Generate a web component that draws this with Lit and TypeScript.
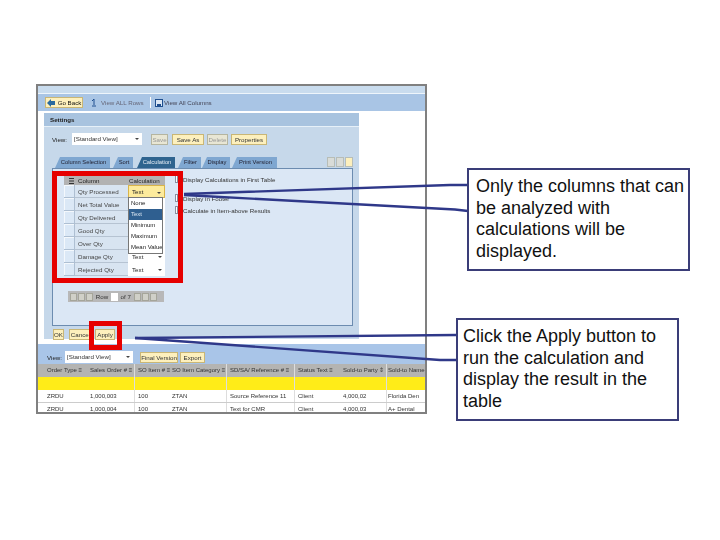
import { LitElement, html, css, svg } from "lit";
import { customElement } from "lit/decorators.js";

const ROWS = ["Qty Processed", "Net Total Value", "Qty Delivered", "Good Qty", "Over Qty", "Damage Qty", "Rejected Qty"];
const COLS = [
  "Order Type \u2261", "Sales Order # \u2261", "SO Item # \u2261", "SO Item Category \u2261",
  "SD/SA/ Reference # \u2261", "Status Text \u2261", "Sold-to Party \u21D5", "Sold-to Name",
];
const DATA = [
  ["ZRDU", "1,000,003", "100", "ZTAN", "Source Reference 11", "Client", "4,000,02", "Florida Den"],
  ["ZRDU", "1,000,004", "100", "ZTAN", "Text for CMR", "Client", "4,000,03", "A+ Dental"],
];

@customElement("app-root")
export class AppRoot extends LitElement {
  static styles = css`
    :host { display: block; width: 720px; height: 540px; background: #fff; overflow: hidden; }
    .stage { position: relative; width: 720px; height: 540px; font-family: "Liberation Sans", Arial, sans-serif; }

    .shot { position: absolute; left: 36px; top: 84px; width: 391px; height: 330px; box-sizing: border-box;
      border: 2px solid #808080; background: #fff; font-size: 6.2px; color: #222; overflow: hidden;
      display: flex; flex-direction: column; filter: blur(0.45px); }
    .top { height: 7px; background: #c9dcee; border-bottom: 1px solid #eef5fb; flex: none; }
    .toolbar { height: 17px; flex: none; background: #a9c5e5; display: flex; align-items: center; padding-left: 7px; gap: 4px; color: #445; }
    .btn { background: #fdf0bd; border: 1px solid #c9b676; height: 11px; line-height: 9px; white-space: nowrap; color: #333;
      box-sizing: border-box; text-align: center; flex: none; overflow: hidden; }
    .btn.plain { background: #e8e6d4; border-color: #b5b5a0; color: #999; }
    .goback { width: 38px; display: flex; align-items: center; justify-content: center; gap: 3px; color: #111; }
    .sep { width: 1px; height: 11px; background: #fff; }
    .rowslink { width: 45px; white-space: nowrap; color: #667; }
    .collink { white-space: nowrap; color: #445; margin-left: -3px; }
    .rowsicon { margin-left: 4px; }

    .settings { margin: 2px 0 5px 6px; width: 315px; height: 226px; flex: none; background: #c6d8ea; display: flex; flex-direction: column; }
    .sethead { height: 13px; flex: none; background: #a8c3df; border-bottom: 1px solid #e6f0f8; font-weight: bold; line-height: 13px; padding-left: 6px; }
    .viewrow { display: flex; align-items: center; height: 18px; margin-top: 3px; padding-left: 8px; flex: none; }
    .sel { background: #fff; height: 12px; line-height: 12px; padding-left: 2px; position: relative; color: #333; box-sizing: border-box; }
    .sel i { position: absolute; right: 3px; top: 5px; width: 0; height: 0; border: 2px solid transparent; border-top: 2.5px solid #444; border-bottom: 0; }
    .view-sel { width: 70px; margin-left: 5px; margin-right: 9px; }
    .w17 { width: 17px; margin-right: 4px; } .w32 { width: 32px; margin-right: 3px; }
    .w21 { width: 21px; margin-right: 3px; } .w36 { width: 36px; }

    .tabs { display: flex; margin: 9px 6px 0 11px; height: 11px; flex: none; font-size: 5.8px; }
    .tab { height: 11px; line-height: 11px; background: #7fa7d1; color: #223; text-align: center; clip-path: polygon(5px 0, 100% 0, 100% 100%, 0 100%); white-space: nowrap; flex: none; padding-left: 2px; box-sizing: border-box; }
    .tab.on { background: #2f648f; color: #e6eef6; }
    .nav { margin-left: auto; display: flex; gap: 1px; }
    .nav b { width: 8px; height: 10px; background: #d9dcd8; border: 1px solid #b7bdb7; box-sizing: border-box; }
    .nav b.act { background: #fdf0bd; }

    .panel { margin: 0 6px 0 8px; height: 158px; flex: none; background: #dbe7f5; border: 1px solid #6c8cb0; box-sizing: border-box; display: flex; }
    .left { width: 122px; padding: 7px 0 0 11px; flex: none; box-sizing: border-box; }
    .grid { width: 101px; position: relative; }
    .ghead { height: 9px; line-height: 9px; background: #b2b2b2; display: flex; align-items: center; color: #222; }
    .ghead svg { margin: 0 4px 0 5px; flex: none; }
    .ghead span { flex: none; }
    .ghead .cn { width: 51px; }
    .grow { height: 13px; display: flex; align-items: stretch; }
    .rsel { width: 11px; background: #dbe8f6; border: 1px solid #aebfd2; border-width: 0 1px 1px 0; box-sizing: border-box; flex: none; box-shadow: inset 1px 1px 0 #f4f8fc; }
    .rname { width: 53px; line-height: 13px; padding-left: 3px; box-sizing: border-box; color: #444; background: #d8e4f1; border-bottom: 1px solid #b6c3d2; flex: none; }
    .rcalc { width: 37px; background: #fff; position: relative; line-height: 13px; padding-left: 4px; box-sizing: border-box; }
    .rcalc i { position: absolute; right: 3px; top: 6px; width: 0; height: 0; border: 2px solid transparent; border-top: 2.5px solid #444; border-bottom: 0; }
    .rcalc.hot { background: #fdeb9c; border: 1px solid #d9b44a; line-height: 11px; padding-left: 3px; }
    .menu { position: absolute; left: 64px; top: 21px; width: 35px; background: #fff; border: 1px solid #777; box-sizing: border-box; font-size: 6px; z-index: 2; }
    .menu div { height: 11px; line-height: 11px; padding-left: 2px; color: #222; white-space: nowrap; overflow: hidden; }
    .menu div.on { background: #2f5f90; color: #dde8f3; }
    .pager { margin: 15px 0 0 4px; width: 96px; height: 11px; background: #b8b8b8; display: flex; align-items: center; gap: 1px; padding-left: 2px; box-sizing: border-box; color: #333; }
    .pager b { width: 7px; height: 8px; background: #d0d0c8; border: 1px solid #a5a59a; box-sizing: border-box; flex: none; }
    .pager u { text-decoration: none; display: inline-block; width: 7px; height: 8px; background: #fff; }

    .opts { flex: 1; color: #333; display: flex; flex-direction: column; padding-top: 6px; }
    .opt { display: flex; align-items: center; gap: 5px; white-space: nowrap; height: 8px; }
    .opt s { display: block; width: 3px; height: 8px; background: #fff; border: 1px solid #8a8fa0; box-sizing: border-box; flex: none; }
    .o2 { margin-top: 11px; } .o3 { margin-top: 4px; }

    .actions { display: flex; padding-left: 9px; margin-top: 3px; flex: none; }
    .ok { width: 11px; margin-right: 5px; } .cancel { width: 23px; margin-right: 3px; } .apply { width: 20px; }

    .band { flex: 1; background: #a9c5e8; display: flex; flex-direction: column; justify-content: flex-end; }
    .tview { height: 14px; display: flex; align-items: center; padding-left: 9px; flex: none; }
    .tview .sel { width: 68px; margin: 0 7px 0 3px; }
    .fv { width: 38px; margin-right: 2px; } .ex { width: 25px; }
    .table { flex: none; height: 48px; overflow: hidden; background: #fff; font-size: 6px; }
    .row { display: flex; white-space: nowrap; }
    .row > span { box-sizing: border-box; padding-left: 3px; overflow: hidden; flex: none; }
    .row.h { height: 13px; background: #b4b4b2; line-height: 13px; color: #333; }
    .row.y { height: 13px; background: #ffec18; }
    .row.d { height: 13px; line-height: 12px; border-bottom: 1px solid #ccc; box-sizing: border-box; color: #333; }
    .c0 { width: 49px; padding-left: 9px !important; }
    .c1 { width: 48px; border-right: 1px solid #ddd; }
    .c2 { width: 35px; }
    .c3 { width: 57px; padding-left: 2px !important; border-right: 1px solid #ddd; }
    .c4 { width: 68px; border-right: 1px solid #ddd; }
    .c5 { width: 45px; }
    .c6 { width: 47px; border-right: 1px solid #ddd; }
    .c7 { width: 38px; padding-left: 1px !important; }

    .redbox { position: absolute; border: 5px solid #e60000; box-sizing: border-box; }
    .red1 { left: 52px; top: 171px; width: 131px; height: 112px; }
    .red2 { left: 89px; top: 321px; width: 33px; height: 29px; }

    .lines { position: absolute; left: 0; top: 0; pointer-events: none; }

    .callout { position: absolute; box-sizing: border-box; width: 223px; height: 103px; background: #fff; border: 2px solid #3a3d78;
      font-size: 18px; line-height: 21.7px; color: #111; padding: 6px 0 0 7px; white-space: pre-line; }
    .c-a { left: 467px; top: 168px; }
    .c-b { left: 456px; top: 318px; padding-left: 5px; }
  `;

  render() {
    return html`<div class="stage">
      <div class="shot">
        <div class="top"></div>
        <div class="toolbar">
          <span class="btn goback"><svg width="8" height="8" viewBox="0 0 8 8"><path d="M0 4 4 0v2h4v4H4v2z" fill="#2a6a9e"/></svg>Go Back</span>
          <svg class="rowsicon" width="6" height="9" viewBox="0 0 6 9"><path d="M3 1v6M1 8h4M1 3l2-2" stroke="#1f4f8f" fill="none"/></svg>
          <span class="rowslink">View ALL Rows</span>
          <span class="sep"></span>
          <svg width="8" height="8" viewBox="0 0 8 8"><rect x=".5" y=".5" width="7" height="7" fill="#dbe7f5" stroke="#1f4f8f"/><path d="M2 5h4v3H2z" fill="#1f4f8f"/></svg>
          <span class="collink">View All Columns</span>
        </div>
        <div class="settings">
          <div class="sethead">Settings</div>
          <div class="viewrow">
            <span>View:</span>
            <span class="sel view-sel">[Standard View]<i></i></span>
            <span class="btn plain w17">Save</span>
            <span class="btn w32">Save As</span>
            <span class="btn plain w21">Delete</span>
            <span class="btn w36">Properties</span>
          </div>
          <div class="tabs">
            <span class="tab" style="width:55px;margin-right:3px">Column Selection</span>
            <span class="tab" style="width:20px;margin-right:4px">Sort</span>
            <span class="tab on" style="width:38px;margin-right:3px">Calculation</span>
            <span class="tab" style="width:23px;margin-right:1px">Filter</span>
            <span class="tab" style="width:28px;margin-right:2px">Display</span>
            <span class="tab" style="width:45px">Print Version</span>
            <span class="nav"><b></b><b></b><b class="act"></b></span>
          </div>
          <div class="panel">
            <div class="left">
              <div class="grid">
                <div class="ghead">
                  <svg width="5" height="6" viewBox="0 0 5 6"><path d="M0 .5h5M0 3h5M0 5.500h5" stroke="#333"/></svg>
                  <span class="cn">Column</span><span>Calculation</span>
                </div>
                ${ROWS.map((r, i) => html`<div class="grow">
                  <span class="rsel"></span><span class="rname">${r}</span>
                  <span class="rcalc ${i === 0 ? "hot" : ""}">${i >= 1 && i <= 4 ? "" : html`Text<i></i>`}</span>
                </div>`)}
                <div class="menu">
                  <div>None</div><div class="on">Text</div><div>Minimum</div><div>Maximum</div><div>Mean Value</div>
                </div>
                <div class="pager"><b></b><b></b><b></b><span>&nbsp;Row&nbsp;</span><u></u><span>&nbsp;of 7&nbsp;</span><b></b><b></b><b></b></div>
              </div>
            </div>
            <div class="opts">
              <div class="opt"><s></s>Display Calculations in First Table</div>
              <div class="opt o2"><s></s>Display in Footer</div>
              <div class="opt o3"><s></s>Calculate in Item-above Results</div>
            </div>
          </div>
          <div class="actions">
            <span class="btn ok">OK</span><span class="btn cancel">Cancel</span><span class="btn apply">Apply</span>
          </div>
        </div>
        <div class="band">
          <div class="tview">
            <span>View:</span><span class="sel">[Standard View]<i></i></span>
            <span class="btn fv">Final Version</span><span class="btn ex">Export</span>
          </div>
        </div>
        <div class="table">
          <div class="row h">${COLS.map((c, i) => html`<span class="c${i}">${c}</span>`)}</div>
          <div class="row y">${COLS.map((_, i) => html`<span class="c${i}"></span>`)}</div>
          ${DATA.map((d) => html`<div class="row d">${d.map((v, i) => html`<span class="c${i}">${v}</span>`)}</div>`)}
        </div>
      </div>

      <div class="redbox red1"></div>
      <div class="redbox red2"></div>

      <svg class="lines" width="720" height="540" viewBox="0 0 720 540">
        ${svg`<g stroke="#2f3889" stroke-width="2.4" fill="none">
          <polyline points="184,194 450,185 468,185"/>
          <polyline points="184,195 455,209.5 468,211"/>
          <polyline points="135,338 456,335"/>
          <polyline points="135,338 440,360 456,360"/>
        </g>`}
      </svg>

      <div class="callout c-a">Only the columns that can
be analyzed with
calculations will be
displayed.</div>
      <div class="callout c-b">Click the Apply button to
run the calculation and
display the result in the
table</div>
    </div>`;
  }
}
